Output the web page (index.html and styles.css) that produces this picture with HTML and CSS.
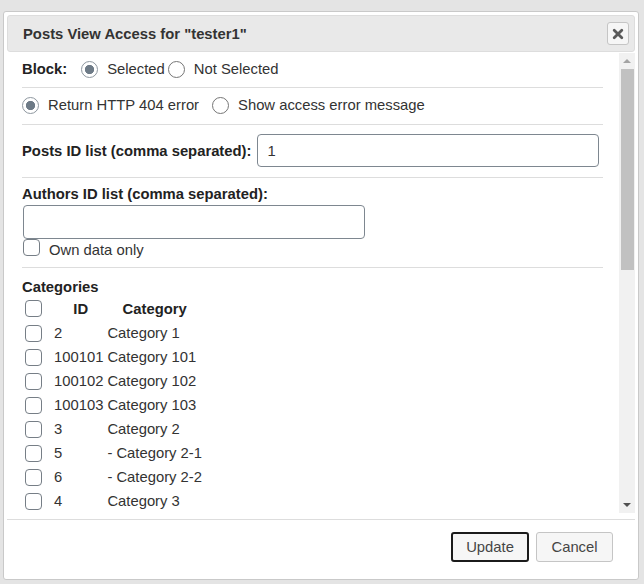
FILE: index.html
```html
<!DOCTYPE html>
<html>
<head>
<meta charset="utf-8">
<link rel="stylesheet" href="styles.css">
</head>
<body>
<div class="dialog">
  <div class="titlebar">
    <span class="title">Posts View Access for "tester1"</span>
    <button class="close" title="Close">
      <svg width="12" height="12" viewBox="0 0 12 12"><path d="M2.2 2.2 L9.8 9.8 M9.8 2.2 L2.2 9.8" stroke="#5a5a5a" stroke-width="2.8" stroke-linecap="round"/></svg>
    </button>
  </div>
  <div class="content">
    <div class="scroller">
      <div class="row r1">
        <span class="lbl">Block:</span>
        <input type="radio" name="block" class="radio ml" checked>
        <span class="opt">Selected</span>
        <input type="radio" name="block" class="radio">
        <span class="opt">Not Selected</span>
      </div>
      <div class="row r2">
        <input type="radio" name="err" class="radio" checked>
        <span class="opt o2">Return HTTP 404 error</span>
        <input type="radio" name="err" class="radio">
        <span class="opt">Show access error message</span>
      </div>
      <div class="row r3">
        <span class="lbl">Posts ID list (comma separated):</span>
        <input type="text" class="field wide" value="1">
      </div>
      <div class="row r4">
        <div class="lbl">Authors ID list (comma separated):</div>
        <input type="text" class="field short" value="">
        <div class="own"><input type="checkbox" class="cb"><span>Own data only</span></div>
      </div>
      <div class="r5">
        <div class="lbl">Categories</div>
        <table class="cats">
          <thead>
            <tr><th class="c1"><input type="checkbox" class="cb hcb"></th><th class="c2">ID</th><th class="c3">Category</th></tr>
          </thead>
          <tbody>
            <tr><td><input type="checkbox" class="cb"></td><td>2</td><td>Category 1</td></tr>
            <tr><td><input type="checkbox" class="cb"></td><td>100101</td><td>Category 101</td></tr>
            <tr><td><input type="checkbox" class="cb"></td><td>100102</td><td>Category 102</td></tr>
            <tr><td><input type="checkbox" class="cb"></td><td>100103</td><td>Category 103</td></tr>
            <tr><td><input type="checkbox" class="cb"></td><td>3</td><td>Category 2</td></tr>
            <tr><td><input type="checkbox" class="cb"></td><td>5</td><td>- Category 2-1</td></tr>
            <tr><td><input type="checkbox" class="cb"></td><td>6</td><td>- Category 2-2</td></tr>
            <tr><td><input type="checkbox" class="cb"></td><td>4</td><td>Category 3</td></tr>
          </tbody>
        </table>
      </div>
    </div>
    <div class="scrollbar">
      <div class="arrow up"></div>
      <div class="thumb"></div>
      <div class="track"></div>
      <div class="arrow down"></div>
    </div>
  </div>
  <div class="buttonpane">
    <button class="btn update">Update</button>
    <button class="btn cancel">Cancel</button>
  </div>
</div>
</body>
</html>
```
FILE: styles.css
```css
* { box-sizing: border-box; }
html, body { margin: 0; padding: 0; }
body {
  width: 644px;
  height: 584px;
  overflow: hidden;
  background: #e4e4e4;
  font-family: "Liberation Sans", Arial, sans-serif;
  font-size: 14.8px;
  color: #333;
  padding-top: 11px;
  padding-left: 3px;
}
.dialog {
  width: 636px;
  height: 569px;
  background: #fff;
  border: 1px solid #c9c9c9;
  border-radius: 3px;
  padding: 3px;
  display: flex;
  flex-direction: column;
}
.titlebar {
  height: 37px;
  flex: none;
  background: #e9e9e9;
  border: 1px solid #dddddd;
  border-radius: 3px;
  display: flex;
  align-items: center;
  padding-left: 15px;
  padding-right: 5px;
}
.title {
  font-weight: bold;
  color: #333;
  flex: 1;
}
.close {
  width: 22px;
  height: 23px;
  padding: 0;
  background: #f6f6f6;
  border: 1px solid #c5c5c5;
  border-radius: 3px;
  display: flex;
  align-items: center;
  justify-content: center;
}
.content {
  height: 460px;
  flex: none;
  margin-top: 1px;
  display: flex;
}
.scroller {
  flex: 1;
  overflow: hidden;
  padding: 0 16px 0 15px;
}
.scrollbar {
  width: 16px;
  background: #f1f1f1;
  display: flex;
  flex-direction: column;
  align-items: center;
}
.arrow {
  width: 0; height: 0;
  border-left: 4px solid transparent;
  border-right: 4px solid transparent;
  margin: 6px 0 5px;
}
.arrow.up { border-bottom: 4px solid #a3a3a3; }
.arrow.down { border-top: 4px solid #505050; margin: 5px 0 6px; }
.thumb {
  width: 13px;
  height: 201px;
  background: #c1c1c1;
  margin-top: 1px;
}
.track { flex: 1; }
.row {
  border-bottom: 1px solid #dddddd;
  display: flex;
  align-items: center;
}
.lbl { font-weight: bold; color: #222; }
.r1 { padding: 6px 0 8px; height: 35px; }
.r2 { padding: 7px 0 9px; height: 37px; }
.r3 { padding: 9px 0 10px; height: 53px; }
.r4 { display: block; padding: 8px 0 0; height: 90px; }
.r5 { padding-top: 11px; }
.radio {
  -webkit-appearance: none;
  appearance: none;
  width: 17px;
  height: 17px;
  margin: 0;
  border: 1px solid #767676;
  border-radius: 50%;
  background: #fff;
  flex: none;
}
.radio:checked {
  border-color: #8e979f;
  background: radial-gradient(circle, #6e7b87 0 4.3px, #fff 5px);
}
.ml { margin-left: 14px; }
.opt { margin-left: 9px; margin-right: 3px; line-height: 20px; }
.o2 { margin-right: 13px; }
.field {
  height: 33px;
  border: 1px solid #7e8790;
  border-radius: 4px;
  font-family: "Liberation Sans", Arial, sans-serif;
  font-size: 14.8px;
  color: #333;
  padding: 0 9px;
}
.wide { width: 342px; margin-left: 6px; }
.short { display: block; width: 342px; height: 34px; margin: 3px 0 0 1px; }
.own {
  display: flex;
  align-items: center;
  margin-left: 1px;
  height: 18px;
  margin-top: -1px;
}
.own span { margin-left: 9px; position: relative; top: 3px; }
.cb {
  -webkit-appearance: none;
  appearance: none;
  width: 17px;
  height: 17px;
  margin: 0;
  border: 1px solid #767e86;
  border-radius: 4px;
  background: #fff;
  display: block;
}
.cats {
  border-collapse: collapse;
  margin-top: 1px;
}
.cats th, .cats td { padding: 0; height: 24px; }
.cats th { height: 25px; font-weight: bold; color: #222; text-align: center; }
.cats td:first-child, .cats th:first-child { width: 32px; }
.cats td .cb { margin-left: 3px; }
.hcb { margin-left: 3px; }
.cats td:nth-child(2) { padding-right: 4px; }
.buttonpane {
  flex: 1;
  border-top: 1px solid #dddddd;
  margin-top: 6px;
  display: flex;
  justify-content: flex-end;
  align-items: flex-start;
  padding: 12px 22px 0 0;
  gap: 7px;
}
.btn {
  height: 30px;
  background: #f6f6f6;
  border: 1px solid #c5c5c5;
  border-radius: 3px;
  font-family: "Liberation Sans", Arial, sans-serif;
  font-size: 14.8px;
  color: #454545;
  padding: 0;
}
.update { width: 78px; border: 2px solid #1b1b1b; }
.cancel { width: 77px; }
```
